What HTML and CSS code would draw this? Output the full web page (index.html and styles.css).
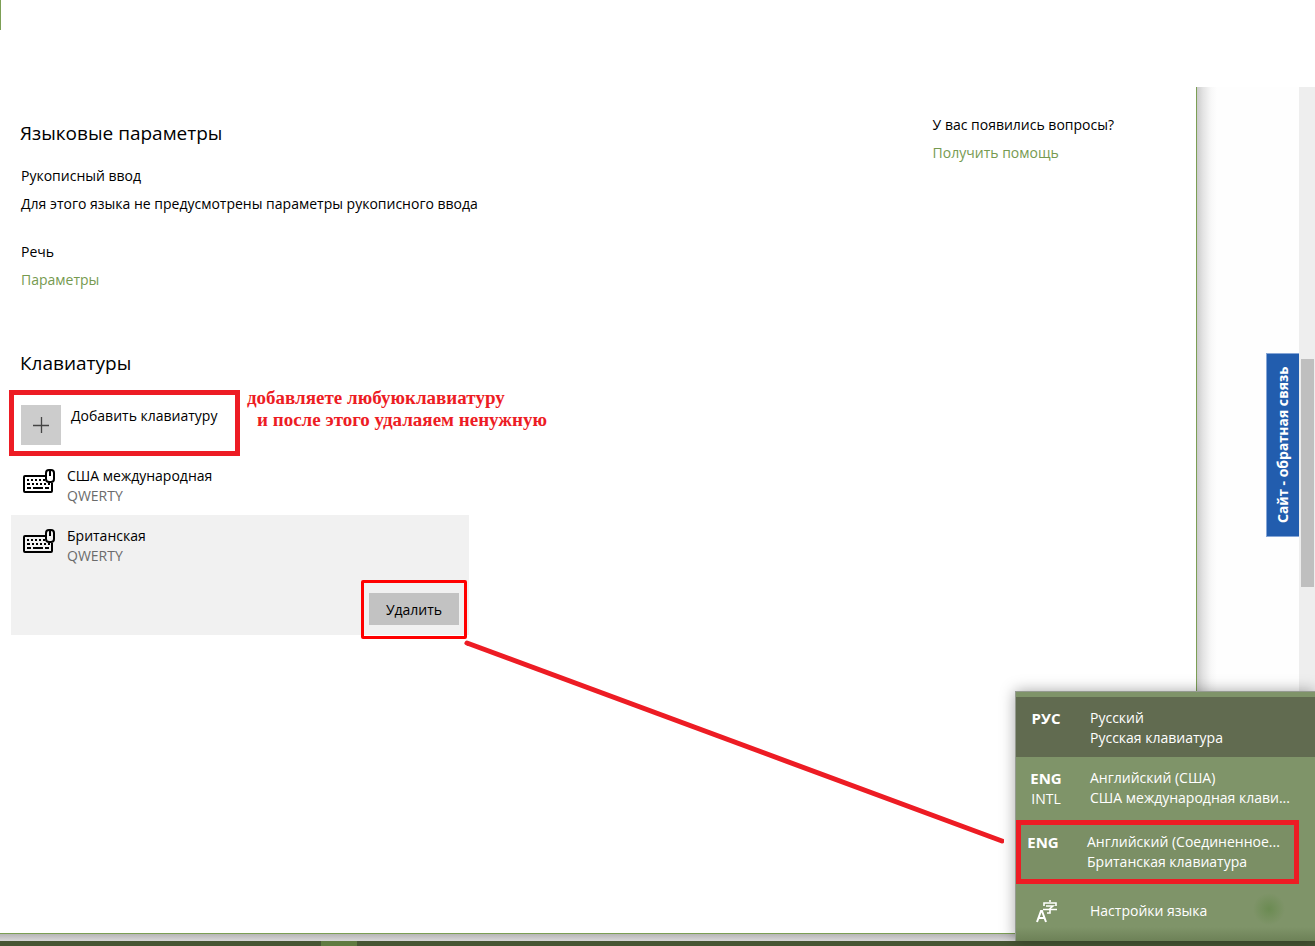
FILE: index.html
```html
<!DOCTYPE html>
<html lang="ru">
<head>
<meta charset="utf-8">
<title>Языковые параметры</title>
<link rel="stylesheet" href="styles.css">
</head>
<body>
<svg class="symbols" width="0" height="0" aria-hidden="true">
  <symbol id="keyboard" viewBox="0 0 32 25">
    <path d="M22 7H2Q1 7 1 8V22Q1 23 2 23H28Q29 23 29 22V14" fill="none" stroke="#000" stroke-width="2"/>
    <path d="M4 11h2M8 11h2M12 11h2M16 11h2M20 11h2M4 15h3M9 15h2M13 15h2M17 15h2M21 15h2M25 15h2M4 19h4M10 19h10M22 19h4" stroke="#000" stroke-width="2"/>
    <rect x="23" y="1" width="8" height="12" rx="3" fill="none" stroke="#000" stroke-width="2"/>
    <path d="M27 2v5" stroke="#000" stroke-width="2"/>
  </symbol>
</svg>
<div class="screen">
  <header class="top"><span class="edge"></span></header>
  <div class="stage">
    <main class="window">
      <div class="settings">
        <h1 class="heading">Языковые параметры</h1>
        <section class="group">
          <h2 class="label">Рукописный ввод</h2>
          <p class="text">Для этого языка не предусмотрены параметры рукописного ввода</p>
        </section>
        <section class="group speech">
          <h2 class="label">Речь</h2>
          <a class="link" href="#">Параметры</a>
        </section>
        <h1 class="heading keyboards-title">Клавиатуры</h1>
        <div class="add-row">
          <div class="add-frame">
            <button class="add" type="button">
              <span class="plus"><svg width="16" height="16" viewBox="0 0 16 16"><path d="M0 8.500h16M8.500 0v16" stroke="#444" stroke-width="1.300"/></svg></span>
              <span class="add-text">Добавить клавиатуру</span>
            </button>
          </div>
          <p class="note">добавляете любуюклавиатуру<span class="note-next">и после этого удалаяем ненужную</span></p>
        </div>
        <ul class="keyboards">
          <li class="keyboard">
            <svg class="kb-icon" width="32" height="25"><use href="#keyboard"/></svg>
            <div><div class="kb-name">США международная</div><div class="kb-type">QWERTY</div></div>
          </li>
          <li class="keyboard selected">
            <svg class="kb-icon" width="32" height="25"><use href="#keyboard"/></svg>
            <div><div class="kb-name">Британская</div><div class="kb-type">QWERTY</div></div>
            <div class="delete-frame"><button class="delete" type="button">Удалить</button></div>
          </li>
        </ul>
      </div>
      <aside class="help">
        <p class="text">У вас появились вопросы?</p>
        <a class="link" href="#">Получить помощь</a>
      </aside>
    </main>
    <div class="behind"><button class="feedback" type="button">Сайт - обратная связь</button></div>
    <div class="scrollbar"><div class="thumb"></div></div>
  </div>
  <div class="desktop-strip"></div>
  <footer class="taskbar"><span class="task"></span></footer>
  <svg class="pointer" width="540" height="204" viewBox="0 0 540 204" aria-hidden="true"><path d="M3 3L538 201" stroke="#ed1c24" stroke-width="5" stroke-linecap="round"/></svg>
  <nav class="menu">
    <button class="lang current" type="button"><span class="code"><b>РУС</b></span><span class="lang-name">Русский<br>Русская клавиатура</span></button>
    <button class="lang" type="button"><span class="code"><b>ENG</b><br>INTL</span><span class="lang-name">Английский (США)<br>США международная клави...</span></button>
    <button class="lang marked" type="button"><span class="code"><b>ENG</b></span><span class="lang-name">Английский (Соединенное...<br>Британская клавиатура</span></button>
    <a class="lang-settings" href="#">
      <span class="code"><svg width="22" height="24" viewBox="0 0 22 24" fill="none" stroke="#fff"><path d="M2 23L6 12H7L11 23M3.500 19H9.500" stroke-width="2"/><path d="M15 1v2M9 7V4H21V7M11 7H18L15 9.500V14H12M8 10.500H22" stroke-width="1.600"/></svg></span>
      <span class="lang-name">Настройки языка</span>
    </a>
  </nav>
</div>
</body>
</html>
```

FILE: styles.css
```css
* { box-sizing: border-box; }
body {
  margin: 0;
  background: #fff;
  color: #000;
  font: 14px/20px "Open Sans", "Noto Sans", sans-serif;
}
h1, h2, p, ul { margin: 0; padding: 0; font-weight: 400; }
button { font: inherit; color: inherit; border: 0; padding: 0; background: none; text-align: left; }
a { text-decoration: none; }
.symbols { position: absolute; }
.screen { position: relative; min-height: 100vh; display: flex; flex-direction: column; overflow: hidden; }
.top { height: 87px; }
.edge { display: block; width: 1px; height: 30px; background: #7c9f55; }
.stage { flex: 1; display: flex; }
.window {
  flex: 1;
  display: flex;
  justify-content: space-between;
  padding: 28px 82px 0 9px;
  border-right: 1px solid #7c9f55;
  border-bottom: 1px solid #7c9f55;
}
.settings { padding-top: 4px; }
.heading { font-size: 19px; line-height: 28px; padding-left: 11px; }
.group { display: grid; gap: 8px; margin-top: 19px; padding-left: 12px; }
.speech { margin-top: 28px; }
.label { font-size: 14px; }
.link { color: #769a50; }
.keyboards-title { margin-top: 59px; }
.add-row { display: flex; gap: 7px; margin-top: 13px; }
.add-frame { width: 231px; height: 66px; border: 5px solid #ed1c24; padding: 10px 7px; }
.add { display: flex; gap: 10px; white-space: nowrap; }
.add-text { padding-top: 1px; }
.plus { display: grid; place-items: center; width: 40px; height: 40px; background: #ccc; }
.note { color: #ed1c24; font: bold 19px/22px "Liberation Serif", serif; margin-top: -3px; white-space: nowrap; }
.note-next { display: block; padding-left: 10px; }
.keyboards { list-style: none; margin-left: 2px; width: 458px; }
.keyboard { display: grid; grid-template-columns: 44px 1fr; padding: 10px 2px 9px 12px; }
.kb-icon { margin-top: 3px; }
.kb-type { color: #6b6b6b; }
.selected { background: #f1f1f1; padding-top: 11px; padding-bottom: 0; height: 120px; }
.delete-frame { grid-column: 2; justify-self: end; margin-top: 14px; width: 106px; height: 59px; padding: 10px 5px; border: 3px solid #f00; border-radius: 2px; }
.delete { width: 90px; height: 32px; padding-top: 1px; background: #c2c2c2; text-align: center; }
.help { display: grid; gap: 8px; align-content: start; }
.behind {
  width: 102px;
  display: flex;
  justify-content: flex-end;
  align-items: flex-start;
  padding-top: 266px;
  background: linear-gradient(90deg, #ccc, #e3e3e3 6px, #f8f8f8 14px, #fefefe 20px);
}
.feedback {
  width: 33px;
  height: 184px;
  writing-mode: vertical-rl;
  rotate: 180deg;
  border: 1px solid #86a6d6;
  border-left: 0;
  background: #225dae;
  color: #fff;
  font-family: "Noto Sans", sans-serif;
  font-weight: 700;
  line-height: 28px;
  text-align: center;
}
.scrollbar { width: 16px; padding: 272px 1px 0 2px; background: #eee; }
.thumb { height: 228px; background: #bfbfbf; }
.desktop-strip { height: 7px; background: linear-gradient(#b7b5b7, #d8d8d8); }
.taskbar { height: 5px; display: flex; padding-left: 321px; background: #475634; }
.task { width: 36px; background: #607b41; }
.pointer { position: absolute; left: 464px; top: 640px; }
.menu {
  position: absolute;
  right: 0;
  bottom: 5px;
  width: 300px;
  height: 250px;
  padding-top: 4px;
  color: #fff;
  background: radial-gradient(circle at 253px 217px, #6b8b52, transparent 16px), linear-gradient(#7f9469 235px, #6d8157);
  border: solid #959b90;
  border-width: 1px 0 0 1px;
  box-shadow: 0 0 14px rgba(0, 0, 0, .35);
}
.lang { display: flex; width: 100%; height: 60px; padding: 11px 0 0; white-space: nowrap; }
.code { width: 60px; text-align: center; margin-right: 14px; }
.code b { font-size: 15px; }
.current { background: #616b50; margin-top: 1px; }
.marked { width: 283px; height: 64px; margin-top: 3px; padding-top: 7px; border: 5px solid #ed1c24; background: #7b8f65; }
.marked .code { width: 44px; margin-right: 22px; }
.lang-settings { display: flex; align-items: center; height: 54px; color: #fff; }
.lang-settings svg { display: block; margin: 0 auto; }
```
